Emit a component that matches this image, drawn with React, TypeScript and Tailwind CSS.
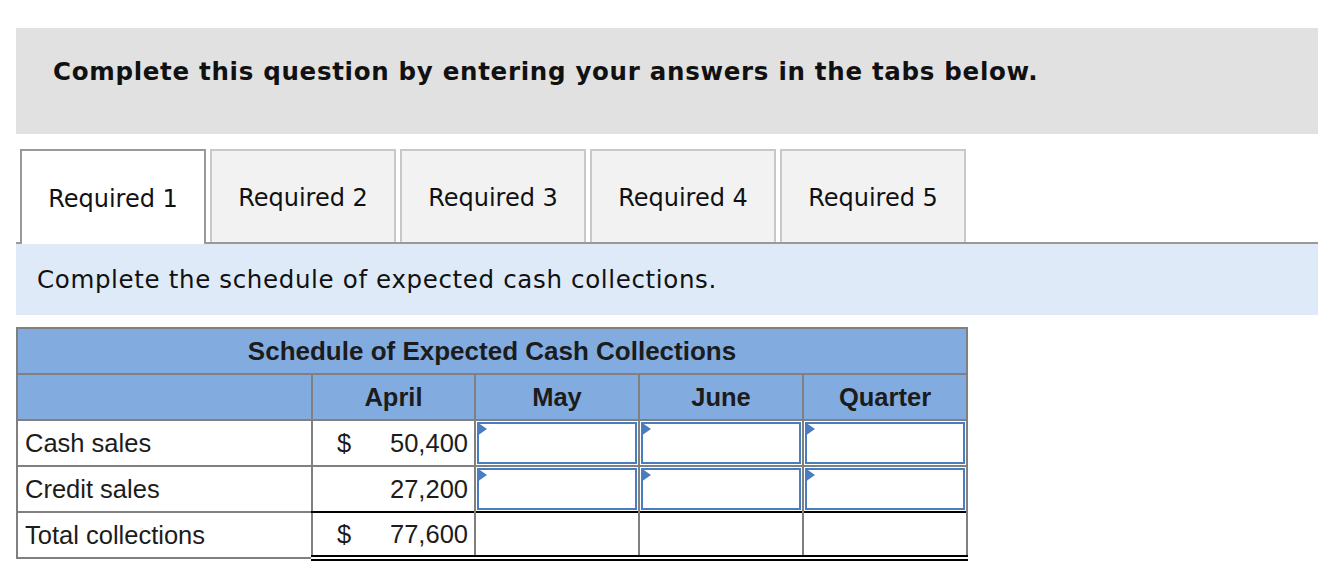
import React from 'react';

const verdana = { fontFamily: '"DejaVu Sans", Verdana, sans-serif' };
const arial = { fontFamily: '"Liberation Sans", Arial, sans-serif' };

const tabs = ['Required 1', 'Required 2', 'Required 3', 'Required 4', 'Required 5'];

const rows = [
  { label: 'Cash sales', dollar: true, april: '50,400' },
  { label: 'Credit sales', dollar: false, april: '27,200' },
];

function InputBox() {
  return (
    <div className="relative h-[42px] border-2 border-[#4a7cc0] bg-white">
      <span className="absolute -top-[2px] -left-[2px] h-0 w-0 border-y-[7px] border-y-transparent border-l-[10px] border-l-[#4a7cc0]" />
    </div>
  );
}

export default function App() {
  return (
    <div className="w-[1318px] h-[574px] overflow-hidden bg-white pt-[28px] pl-[16px] text-[#1c1c1c]">
      {/* Question banner */}
      <div className="h-[106px] bg-[#e1e1e1] pl-[37px] pt-[29px]">
        <p style={verdana} className="text-[24.5px] font-bold leading-[30px] tracking-[0.7px] text-[#111]">
          Complete this question by entering your answers in the tabs below.
        </p>
      </div>

      {/* Tabs */}
      <div className="mt-[15px] flex h-[95px]">
        <div className="w-[4px] border-b-2 border-[#999]" />
        <div
          style={verdana}
          className="flex w-[186px] items-center justify-center border-2 border-b-0 border-[#999] bg-white pt-[2px] text-[24px] text-[#111]"
        >
          {tabs[0]}
        </div>
        <div className="flex flex-1 gap-[4px] border-b-2 border-[#999] pl-[4px]">
          {tabs.slice(1).map((t) => (
            <div
              key={t}
              style={verdana}
              className="flex w-[186px] items-center justify-center border-2 border-b-0 border-[#c8c8c8] bg-[#f2f2f2] pt-[2px] text-[24px] text-[#111]"
            >
              {t}
            </div>
          ))}
        </div>
      </div>

      {/* Instruction */}
      <div className="flex h-[71px] items-center bg-[#deeaf7] pl-[21px] pt-[2px]">
        <p style={verdana} className="text-[24.5px] tracking-[0.65px] text-[#111]">
          Complete the schedule of expected cash collections.
        </p>
      </div>

      {/* Schedule */}
      <table style={arial} className="mt-[12px] w-[950px] table-fixed border-collapse text-[25.5px]">
        <colgroup>
          <col className="w-[295px]" />
          <col className="w-[163px]" />
          <col className="w-[164px]" />
          <col className="w-[164px]" />
          <col className="w-[164px]" />
        </colgroup>
        <tbody>
          <tr className="h-[46px]">
            <td colSpan={5} className="border-2 border-[#808080] bg-[#82abe0] text-center text-[26px] font-bold">
              Schedule of Expected Cash Collections
            </td>
          </tr>
          <tr className="h-[46px] bg-[#82abe0] font-bold">
            <td className="border-2 border-[#808080]" />
            <td className="border-2 border-[#808080] text-center">April</td>
            <td className="border-2 border-[#808080] text-center">May</td>
            <td className="border-2 border-[#808080] text-center">June</td>
            <td className="border-2 border-[#808080] text-center">Quarter</td>
          </tr>
          {rows.map((r, i) => {
            const last = i === rows.length - 1;
            const valBorder = last ? 'border-2 border-[#808080] border-b-black' : 'border-2 border-[#808080]';
            return (
              <tr key={r.label} className="h-[46px]">
                <td className="border-2 border-[#808080] pl-[7px]">{r.label}</td>
                <td className={`${valBorder} pr-[6px] pl-[24px]`}>
                  <div className="flex justify-between">
                    <span>{r.dollar ? '$' : ''}</span>
                    <span>{r.april}</span>
                  </div>
                </td>
                {[0, 1, 2].map((k) => (
                  <td key={k} className={`${valBorder} p-[1px]`}>
                    <InputBox />
                  </td>
                ))}
              </tr>
            );
          })}
          <tr className="h-[46px]">
            <td className="border-2 border-[#808080] pl-[7px]">Total collections</td>
            <td className="border-x-2 border-x-[#808080] border-t-2 border-t-black border-b-[6px] border-b-black border-double pr-[6px] pl-[24px]">
              <div className="flex justify-between">
                <span>$</span>
                <span>77,600</span>
              </div>
            </td>
            {[0, 1, 2].map((k) => (
              <td
                key={k}
                className="border-x-2 border-x-[#808080] border-t-2 border-t-black border-b-[6px] border-b-black border-double"
              />
            ))}
          </tr>
        </tbody>
      </table>
    </div>
  );
}
